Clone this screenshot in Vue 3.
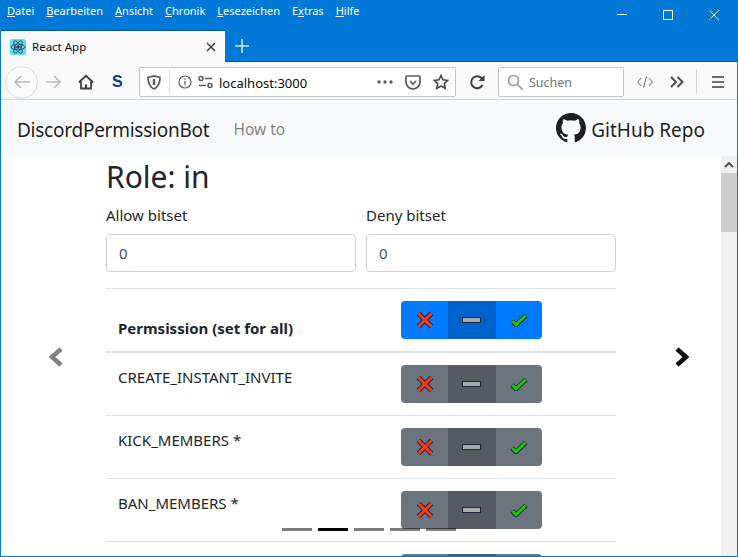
<script setup>
const menu = [
  ['', 'D', 'atei'], ['', 'B', 'earbeiten'], ['', 'A', 'nsicht'], ['', 'C', 'hronik'],
  ['', 'L', 'esezeichen'], ['E', 'x', 'tras'], ['', 'H', 'ilfe']
]
const rows = [
  { name: 'CREATE_INSTANT_INVITE' },
  { name: 'KICK_MEMBERS *' },
  { name: 'BAN_MEMBERS *' },
  { name: '' }
]
const dots = [false, true, false, false, false]
</script>

<template>
  <div class="window">
    <header class="titlebar">
      <nav class="menu">
        <span v-for="m in menu" :key="m[2]" class="menu-item">{{ m[0] }}<u>{{ m[1] }}</u>{{ m[2] }}</span>
      </nav>
      <div class="controls">
        <svg width="46" height="30" viewBox="0 0 46 30"><path d="M18 14.500h10" stroke="#fff" fill="none"/></svg>
        <svg width="46" height="30" viewBox="0 0 46 30"><rect x="18.500" y="10.500" width="9" height="9" stroke="#fff" fill="none"/></svg>
        <svg width="46" height="30" viewBox="0 0 46 30"><path d="M18 10l10 10M28 10l-10 10" stroke="#fff" fill="none"/></svg>
      </div>
    </header>

    <div class="tabstrip">
      <div class="tab">
        <span class="favicon">
          <svg width="16" height="16" viewBox="0 0 16 16" fill="none" stroke="#2b3a42" stroke-width=".8">
            <ellipse cx="8" cy="8" rx="7" ry="2.800"/>
            <ellipse cx="8" cy="8" rx="7" ry="2.800" transform="rotate(60 8 8)"/>
            <ellipse cx="8" cy="8" rx="7" ry="2.800" transform="rotate(120 8 8)"/>
            <circle cx="8" cy="8" r="1.300" fill="#2b3a42"/>
          </svg>
        </span>
        <span class="tab-title">React App</span>
        <svg class="tab-close" width="10" height="10" viewBox="0 0 10 10"><path d="M1 1l8 8M9 1l-8 8" stroke="#333" stroke-width="1.300" fill="none"/></svg>
      </div>
      <svg class="newtab" width="14" height="14" viewBox="0 0 14 14"><path d="M7 0v14M0 7h14" stroke="#cfe4f7" stroke-width="1.600" fill="none"/></svg>
    </div>

    <div class="toolbar">
      <span class="back">
        <svg width="18" height="16" viewBox="0 0 18 16" fill="none" stroke="#b8b8b9" stroke-width="1.700"><path d="M17 8H2M8 2L2 8l6 6"/></svg>
      </span>
      <svg class="fwd" width="16" height="16" viewBox="0 0 16 16" fill="none" stroke="#b8b8b9" stroke-width="1.700"><path d="M0 8h14M8 2l6 6-6 6"/></svg>
      <svg class="home" width="16" height="16" viewBox="0 0 16 16" fill="none" stroke="#3f3f41" stroke-width="1.800"><path d="M.8 8.500L8 1.800l7.200 6.700"/><path d="M3 7.500V14.500h10V7.500"/><path d="M8 10.500v4" stroke-width="2.200"/></svg>
      <span class="ext-s">S</span>

      <div class="urlbar">
        <svg class="shield" width="14" height="15" viewBox="0 0 14 15" fill="none" stroke="#5a5a5c" stroke-width="1.700"><path d="M1 2.500C3 2 5 1.500 7 1c2 .5 4 1 6 1.500 0 5-1 9-6 11.500C2 11.500 1 7.500 1 2.500z"/><path d="M7 4v6" stroke-width="2.500"/></svg>
        <span class="sep"></span>
        <svg class="info" width="14" height="14" viewBox="0 0 14 14" fill="none" stroke="#5a5a5c" stroke-width="1.200"><circle cx="7" cy="7" r="6"/><path d="M7 6v4.500M7 3.300v1.500"/></svg>
        <svg class="perm" width="15" height="14" viewBox="0 0 15 14" fill="none" stroke="#5a5a5c" stroke-width="1.500"><circle cx="3" cy="3.500" r="2"/><path d="M7 3.500h7M1 10.500h7"/><circle cx="12" cy="10.500" r="2"/></svg>
        <span class="url">localhost:3000</span>
        <svg class="dots" width="16" height="4" viewBox="0 0 16 4" fill="#5a5a5c"><circle cx="2" cy="2" r="1.700"/><circle cx="8" cy="2" r="1.700"/><circle cx="14" cy="2" r="1.700"/></svg>
        <svg class="pocket" width="16" height="15" viewBox="0 0 16 15" fill="none" stroke="#5a5a5c" stroke-width="1.700"><path d="M2 1h12a1 1 0 0 1 1 1v5a7 7 0 0 1-14 0V2a1 1 0 0 1 1-1z"/><path d="M5 6l3 3 3-3"/></svg>
        <svg class="star" width="16" height="16" viewBox="0 0 16 16" fill="none" stroke="#4c4c4e" stroke-width="1.700"><path d="M8 1.500l2 4.300 4.700.6-3.400 3.200.9 4.700L8 12l-4.200 2.300.9-4.700L1.300 6.400 6 5.800z"/></svg>
      </div>

      <svg class="reload" width="16" height="16" viewBox="0 0 16 16" fill="none" stroke="#3f3f41" stroke-width="2"><path d="M13.500 11A6 6 0 1 1 12.500 4L14 5.500"/><path d="M15.500 1v6h-6z" fill="#3f3f41" stroke="none"/></svg>

      <div class="search">
        <svg width="16" height="16" viewBox="0 0 16 16" fill="none" stroke="#9a9a9c" stroke-width="1.700"><circle cx="6.500" cy="6.500" r="5"/><path d="M10 10l5.500 5.500"/></svg>
        <span class="search-label">Suchen</span>
      </div>

      <svg class="devtools" width="16" height="12" viewBox="0 0 16 12" fill="none" stroke="#6a6a6c" stroke-width="1"><path d="M4 2L.7 6 4 10M12 2l3.300 4L12 10M9.500 .5l-3 11"/></svg>
      <svg class="more" width="14" height="12" viewBox="0 0 14 12" fill="none" stroke="#4c4c4e" stroke-width="2"><path d="M1 1l5 5-5 5M7.500 1l5 5-5 5"/></svg>
      <span class="tool-sep"></span>
      <svg class="burger" width="12" height="12" viewBox="0 0 12 12" stroke="#3f3f41" stroke-width="1.700"><path d="M0 1h12M0 6h12M0 11h12"/></svg>
    </div>

    <div class="site-nav">
      <a class="brand">DiscordPermissionBot</a>
      <a class="nav-link">How to</a>
      <a class="repo">
        <svg width="30" height="30" viewBox="0 0 16 16" fill="#1b1f23"><path fill-rule="evenodd" d="M8 0C3.580 0 0 3.580 0 8c0 3.540 2.290 6.530 5.470 7.590.4.070.55-.17.55-.38 0-.19-.01-.82-.01-1.490-2.010.37-2.530-.49-2.690-.94-.09-.23-.48-.94-.82-1.130-.28-.15-.68-.52-.01-.53.630-.01 1.080.58 1.230.82.720 1.210 1.870.87 2.330.66.070-.52.280-.87.510-1.070-1.780-.2-3.640-.89-3.640-3.950 0-.87.310-1.590.82-2.150-.08-.2-.36-1.020.08-2.120 0 0 .67-.21 2.200.82.640-.18 1.320-.27 2-.27.680 0 1.360.09 2 .27 1.530-1.040 2.200-.82 2.200-.82.440 1.100.160 1.920.08 2.120.510.560.820 1.270.820 2.150 0 3.070-1.870 3.750-3.650 3.950.290.250.540.730.540 1.480 0 1.070-.01 1.930-.01 2.200 0 .210.150.460.550.380A8.013 8.013 0 0 0 16 8c0-4.420-3.580-8-8-8z"/></svg>
        <span class="repo-label">GitHub Repo</span>
      </a>
    </div>

    <div class="viewport">
      <main class="page">
        <div class="container">
          <h1 class="role">Role: in</h1>
          <div class="bitsets">
            <label class="field">
              <span>Allow bitset</span>
              <input class="input" value="0" />
            </label>
            <label class="field">
              <span>Deny bitset</span>
              <input class="input" value="0" />
            </label>
          </div>
          <hr class="rule" />
          <div class="row head">
            <strong class="name">Permsission (set for all)</strong>
            <div class="group blue">
              <button class="btn"><svg width="20" height="20" viewBox="0 0 20 20"><path d="M3.500 3.500l13 13M16.500 3.500l-13 13" stroke="#1a2540" stroke-width="5" fill="none"/><path d="M3.500 3.500l13 13M16.500 3.500l-13 13" stroke="#ff3a12" stroke-width="3" fill="none"/></svg></button>
              <button class="btn active"><svg width="20" height="6" viewBox="0 0 20 6"><rect x=".5" y=".5" width="18" height="5" fill="#aaa" stroke="#1a2540"/></svg></button>
              <button class="btn"><svg width="18" height="14" viewBox="0 0 18 14"><path d="M2 8l4 4L16 2.500" stroke="#17263a" stroke-width="4.600" fill="none"/><path d="M2.300 8l3.700 3.700L15.700 2.500" stroke="#20c800" stroke-width="2.800" fill="none"/></svg></button>
            </div>
          </div>
          <div v-for="(r, i) in rows" :key="i" class="row">
            <span class="name">{{ r.name }}</span>
            <div class="group gray">
              <button class="btn"><svg width="20" height="20" viewBox="0 0 20 20"><path d="M3.500 3.500l13 13M16.500 3.500l-13 13" stroke="#1a2540" stroke-width="5" fill="none"/><path d="M3.500 3.500l13 13M16.500 3.500l-13 13" stroke="#ff3a12" stroke-width="3" fill="none"/></svg></button>
              <button class="btn active"><svg width="20" height="6" viewBox="0 0 20 6"><rect x=".5" y=".5" width="18" height="5" fill="#aaa" stroke="#1a2540"/></svg></button>
              <button class="btn"><svg width="18" height="14" viewBox="0 0 18 14"><path d="M2 8l4 4L16 2.500" stroke="#17263a" stroke-width="4.600" fill="none"/><path d="M2.300 8l3.700 3.700L15.700 2.500" stroke="#20c800" stroke-width="2.800" fill="none"/></svg></button>
            </div>
          </div>
        </div>
        <svg class="arrow prev" width="16" height="20" viewBox="0 0 16 20"><path d="M13 2L4 10l9 8" stroke="#808080" stroke-width="4.500" fill="none"/></svg>
        <svg class="arrow next" width="16" height="20" viewBox="0 0 16 20"><path d="M3 2l9 8-9 8" stroke="#111" stroke-width="4.500" fill="none"/></svg>
        <div class="indicators">
          <span v-for="(d, i) in dots" :key="i" class="dot" :class="{ on: d }"></span>
        </div>
      </main>
      <aside class="scrollbar">
        <span class="sb-up"><svg width="10" height="6" viewBox="0 0 10 6"><path d="M1 5l4-4 4 4" stroke="#505050" stroke-width="2" fill="none"/></svg></span>
        <span class="sb-thumb"></span>
      </aside>
    </div>
  </div>
</template>

<style>
html, body { margin: 0; padding: 0; overflow: hidden; }
</style>

<style scoped>
.window {
  box-sizing: border-box;
  width: 738px;
  height: 557px;
  display: flex;
  flex-direction: column;
  border-left: 1px solid #0078d7;
  border-right: 1px solid #0078d7;
  border-bottom: 1px solid #0078d7;
  background: #fff;
  font-family: "Noto Sans", "Open Sans", sans-serif;
  color: #212529;
  overflow: hidden;
}
.titlebar {
  height: 30px;
  flex: none;
  background: #0078d7;
  display: flex;
  justify-content: space-between;
}
.menu { display: flex; gap: 12px; padding: 3px 0 0 6px; font-size: 11px; color: #fff; line-height: 16px; }
.controls { display: flex; }

.tabstrip {
  height: 32px;
  flex: none;
  background: #0078d7;
  box-sizing: border-box;
  border-bottom: 1px solid #005a9e;
  display: flex;
  align-items: center;
}
.tab {
  box-sizing: border-box;
  width: 224px;
  height: 32px;
  margin-bottom: -1px;
  background: #f9f9fa;
  border-top: 1px solid #005a9e;
  display: flex;
  align-items: center;
  padding: 0 9px 0 9px;
  font-size: 11.500px;
}
.favicon { width: 16px; height: 16px; background: #61dafb; border-radius: 2px; display: block; }
.favicon svg { display: block; }
.tab-title { margin-left: 6px; flex: 1; color: #0c0c0d; }
.newtab { margin-left: 10px; }

.toolbar {
  height: 38px;
  flex: none;
  box-sizing: border-box;
  background: #f9f9fa;
  border-bottom: 1px solid #d4d4d4;
  display: flex;
  align-items: center;
  padding: 3px 0 0 4px;
}
.back {
  box-sizing: border-box;
  width: 33px;
  height: 33px;
  border: 1px solid #d8d8da;
  border-radius: 50%;
  background: #fbfbfb;
  display: flex;
  align-items: center;
  justify-content: center;
  flex: none;
}
.fwd { margin-left: 8px; }
.home { margin-left: 16px; }
.ext-s { margin-left: 18px; width: 14px; font: 700 16px "Liberation Sans", sans-serif; color: #0b3a8c; }
.urlbar {
  box-sizing: border-box;
  width: 317px;
  height: 30px;
  margin-left: 13px;
  background: #fff;
  border: 1px solid #c4c4c6;
  border-radius: 2px;
  display: flex;
  align-items: center;
  padding-left: 7px;
  flex: none;
}
.sep { width: 1px; height: 24px; background: #e2e2e3; margin-left: 8px; }
.info { margin-left: 8px; }
.perm { margin-left: 6px; }
.url { margin-left: 6px; flex: 1; font-size: 13px; color: #0c0c0d; padding-top: 1px; }
.pocket { margin-left: 12px; }
.star { margin: 0 6px 0 12px; }
.reload { margin-left: 13px; flex: none; }
.search {
  box-sizing: border-box;
  width: 126px;
  height: 30px;
  margin-left: 13px;
  background: #fff;
  border: 1px solid #c4c4c6;
  border-radius: 2px;
  display: flex;
  align-items: center;
  gap: 6px;
  padding-left: 8px;
  font-size: 12.500px;
  color: #737373;
  flex: none;
}
.search-label { padding-top: 1px; }
.devtools { margin-left: 13px; flex: none; }
.more { margin-left: 17px; flex: none; }
.tool-sep { width: 1px; height: 26px; background: #d8d8d9; margin-left: 12px; flex: none; }
.burger { margin-left: 15px; flex: none; }

.site-nav {
  height: 56px;
  flex: none;
  background: #f8f9fa;
  box-sizing: border-box;
  display: flex;
  align-items: center;
  padding: 0 32px 0 16px;
}
.brand { font-size: 19px; letter-spacing: -.25px; color: rgba(0, 0, 0, .9); padding-top: 3px; }
.nav-link { margin-left: 24px; font-size: 15.500px; color: rgba(0, 0, 0, .5); padding-top: 2px; }
.repo { margin-left: auto; display: flex; align-items: center; gap: 5px; font-size: 19px; color: rgba(0, 0, 0, .9); }
.repo svg { display: block; }
.repo-label { padding-top: 3px; }

.viewport { flex: 1; min-height: 0; display: flex; }
.page { position: relative; flex: 1; min-width: 0; overflow: hidden; }
.container { margin-left: 105px; width: 510px; }
.role { margin: 0; font-size: 30px; font-weight: 400; line-height: 42px; }
.bitsets { display: flex; gap: 10px; margin-top: 6px; }
.field { flex: 1; display: flex; flex-direction: column; gap: 8px; font-size: 15px; line-height: 22px; }
.input {
  box-sizing: border-box;
  width: 100%;
  height: 38px;
  padding: 0 12px;
  border: 1px solid #ced4da;
  border-radius: 4px;
  font: inherit;
  color: #495057;
  background: #fff;
}
.rule { margin: 16px 0 0; border: 0; border-top: 1px solid #dee2e6; }
.row {
  box-sizing: border-box;
  height: 63px;
  display: flex;
  justify-content: space-between;
  padding: 12px 74px 12px 12px;
  border-top: 1px solid #dee2e6;
  font-size: 15px;
  line-height: 24px;
}
.row.head {
  height: 64px;
  border-top: 0;
  border-bottom: 2px solid #dee2e6;
  align-items: flex-end;
  padding-top: 12px;
}
.row.head + .row { border-top: 0; height: 62px; }
.name { display: block; }
.head .name { line-height: 24px; margin-bottom: -1px; }
.group { display: grid; grid-template-columns: 47px 48px 46px; width: 141px; height: 38px; border-radius: 4px; overflow: hidden; flex: none; }
.btn {
  border: 0;
  padding: 0;
  display: flex;
  align-items: center;
  justify-content: center;
  background: transparent;
}
.blue .btn { background: #007bff; }
.blue .btn.active { background: #0062cc; }
.gray .btn { background: #6c757d; }
.gray .btn.active { background: #545b62; }

.arrow { position: absolute; top: 191px; }
.prev { left: 47px; }
.next { left: 673px; }
.indicators { position: absolute; left: 281px; top: 372px; display: flex; gap: 6px; }
.dot { width: 30px; height: 3px; background: rgba(0, 0, 0, .5); }
.dot.on { background: #000; }

.scrollbar { width: 16px; flex: none; background: #f0f0f0; display: flex; flex-direction: column; }
.sb-up { height: 17px; display: flex; align-items: center; justify-content: center; }
.sb-thumb { height: 59px; background: #cdcdcd; }
</style>
